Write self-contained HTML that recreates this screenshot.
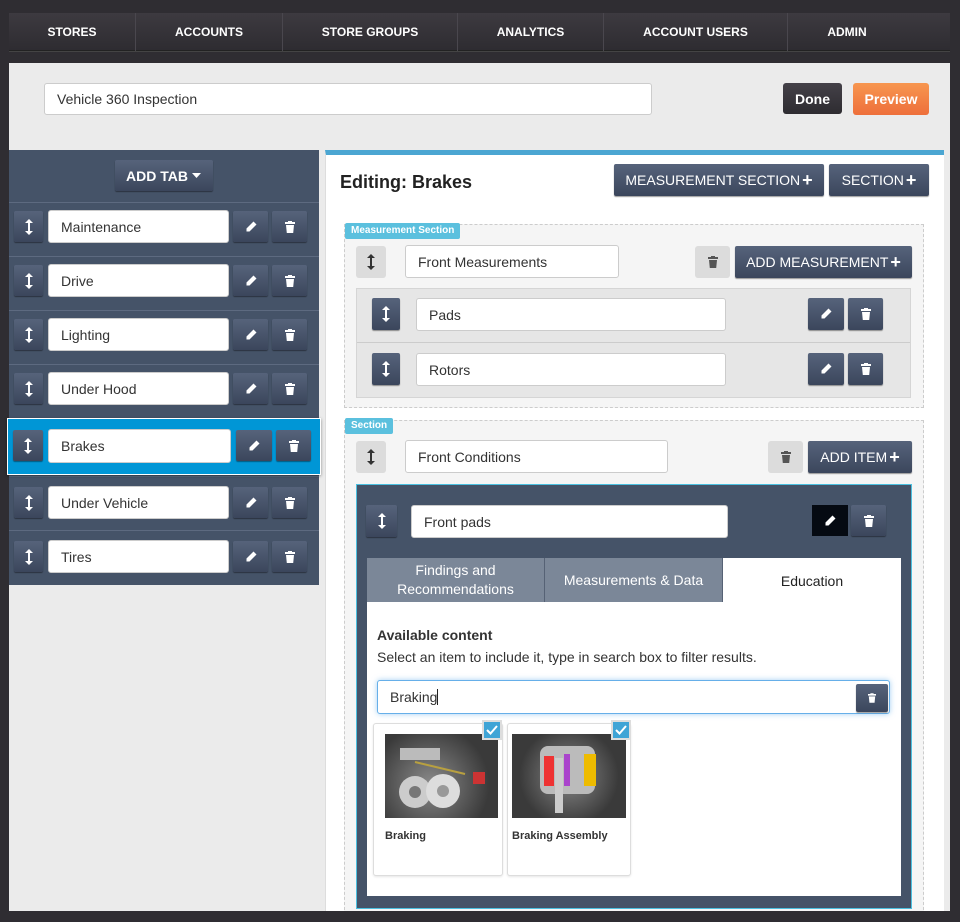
<!DOCTYPE html>
<html><head><meta charset="utf-8">
<style>
*{box-sizing:border-box;margin:0;padding:0}
body{width:960px;height:922px;background:#2f2d32;font-family:"Liberation Sans",sans-serif;position:relative;overflow:hidden}
.a{position:absolute}
.nav{left:9px;top:13px;width:941px;height:38px;background:linear-gradient(#3d3a40,#2e2c31);border-bottom:1px solid #222;box-shadow:0 1px 0 #444}
.nav div{position:absolute;top:0;height:38px;line-height:38px;color:#fff;font-weight:bold;font-size:12px;text-align:center;border-right:1px solid #4a474e}
.in{background:#fff;border:1px solid #ccc;border-radius:3px;font-size:14px;color:#333;padding-left:12px;display:flex;align-items:center}
.btn{background:linear-gradient(#56637b,#3b465c);color:#fff;display:flex;align-items:center;justify-content:center;border-radius:2px;box-shadow:0 1px 1px rgba(0,0,0,.4)}
.gbtn{background:#dcdcdc;color:#444;display:flex;align-items:center;justify-content:center;border-radius:3px}
.row{left:9px;width:310px;height:52px;background:#455368;border-top:1px solid #5d6a80}
.lbl{background:#5bc0de;color:#fff;font-weight:bold;font-size:10px;padding:1px 6px;border-radius:2px;height:16px;line-height:14px}
.dash{border:1px dashed #ccc;background:#f5f5f5}
.tab{top:558px;height:44px;background:#7b8798;color:#fff;font-size:14px;display:flex;align-items:center;justify-content:center;text-align:center;line-height:19px;border-right:1px solid #566275}
.card{background:#fff;border:1px solid #ddd;border-radius:3px;box-shadow:0 1px 2px rgba(0,0,0,.1)}
.chk{width:20px;height:20px;background:#3fa4d6;border:2px solid #ddd;display:flex;align-items:center;justify-content:center}
</style></head><body>

<div class="a nav">
<div style="left:0;width:127px">STORES</div>
<div style="left:127px;width:147px">ACCOUNTS</div>
<div style="left:274px;width:175px">STORE GROUPS</div>
<div style="left:449px;width:146px">ANALYTICS</div>
<div style="left:595px;width:184px">ACCOUNT USERS</div>
<div style="left:779px;width:118px;border:none">ADMIN</div>
</div>

<div class="a" style="left:9px;top:63px;width:941px;height:848px;background:#ebebeb"></div>
<div class="a in" style="left:44px;top:83px;width:608px;height:32px;font-size:14px">Vehicle 360 Inspection</div>
<div class="a" style="left:783px;top:83px;width:59px;height:31px;background:linear-gradient(#444148,#2e2c31);border-radius:3px;color:#fff;font-weight:bold;font-size:14px;display:flex;align-items:center;justify-content:center">Done</div>
<div class="a" style="left:853px;top:83px;width:76px;height:32px;background:linear-gradient(#f7964f,#ee6f3b);border-radius:3px;color:#fff;font-weight:bold;font-size:14px;display:flex;align-items:center;justify-content:center">Preview</div>

<!-- left panel -->
<div class="a" style="left:9px;top:150px;width:310px;height:435px;background:#455368"></div>
<div class="a btn" style="left:115px;top:160px;width:98px;height:31px;font-weight:bold;font-size:14px">ADD TAB <svg width="10" height="6" style="margin-left:4px"><path d="M0 0h9L4.5 5z" fill="#fff"/></svg></div>

<div class="a row" style="top:202px"></div>
<div class="a row" style="top:256px"></div>
<div class="a row" style="top:310px"></div>
<div class="a row" style="top:364px"></div>
<div class="a row" style="top:476px"></div>
<div class="a row" style="top:530px;height:55px"></div>
<div class="a" style="left:7px;top:418px;width:314px;height:57px;background:#0096d6;border:1px solid #fff;box-shadow:0 1px 3px rgba(0,0,0,.4)"></div>

<!-- left rows content -->
<div class="a btn" style="left:14px;top:211px;width:29px;height:31px"><svg width="8" height="16" viewBox="0 0 8 16"><path d="M4 0L0 4h3v8H0l4 4 4-4H5V4h3z" fill="#fff"/></svg></div>
<div class="a in" style="left:48px;top:210px;width:181px;height:33px">Maintenance</div>
<div class="a btn" style="left:233px;top:211px;width:35px;height:31px"><svg width="12" height="12" viewBox="0 0 12 12"><path d="M8.5 0.5l3 3-7 7H1.5v-3z" fill="#fff"/></svg></div>
<div class="a btn" style="left:272px;top:211px;width:35px;height:31px"><svg width="10" height="12" viewBox="0 0 10 12"><path d="M3 0h4v1h3v2H0V1h3zM1 4h8l-.8 8H1.8z" fill="#fff"/></svg></div>

<div class="a btn" style="left:14px;top:265px;width:29px;height:31px"><svg width="8" height="16" viewBox="0 0 8 16"><path d="M4 0L0 4h3v8H0l4 4 4-4H5V4h3z" fill="#fff"/></svg></div>
<div class="a in" style="left:48px;top:264px;width:181px;height:33px">Drive</div>
<div class="a btn" style="left:233px;top:265px;width:35px;height:31px"><svg width="12" height="12" viewBox="0 0 12 12"><path d="M8.5 0.5l3 3-7 7H1.5v-3z" fill="#fff"/></svg></div>
<div class="a btn" style="left:272px;top:265px;width:35px;height:31px"><svg width="10" height="12" viewBox="0 0 10 12"><path d="M3 0h4v1h3v2H0V1h3zM1 4h8l-.8 8H1.8z" fill="#fff"/></svg></div>

<div class="a btn" style="left:14px;top:319px;width:29px;height:31px"><svg width="8" height="16" viewBox="0 0 8 16"><path d="M4 0L0 4h3v8H0l4 4 4-4H5V4h3z" fill="#fff"/></svg></div>
<div class="a in" style="left:48px;top:318px;width:181px;height:33px">Lighting</div>
<div class="a btn" style="left:233px;top:319px;width:35px;height:31px"><svg width="12" height="12" viewBox="0 0 12 12"><path d="M8.5 0.5l3 3-7 7H1.5v-3z" fill="#fff"/></svg></div>
<div class="a btn" style="left:272px;top:319px;width:35px;height:31px"><svg width="10" height="12" viewBox="0 0 10 12"><path d="M3 0h4v1h3v2H0V1h3zM1 4h8l-.8 8H1.8z" fill="#fff"/></svg></div>

<div class="a btn" style="left:14px;top:373px;width:29px;height:31px"><svg width="8" height="16" viewBox="0 0 8 16"><path d="M4 0L0 4h3v8H0l4 4 4-4H5V4h3z" fill="#fff"/></svg></div>
<div class="a in" style="left:48px;top:372px;width:181px;height:33px">Under Hood</div>
<div class="a btn" style="left:233px;top:373px;width:35px;height:31px"><svg width="12" height="12" viewBox="0 0 12 12"><path d="M8.5 0.5l3 3-7 7H1.5v-3z" fill="#fff"/></svg></div>
<div class="a btn" style="left:272px;top:373px;width:35px;height:31px"><svg width="10" height="12" viewBox="0 0 10 12"><path d="M3 0h4v1h3v2H0V1h3zM1 4h8l-.8 8H1.8z" fill="#fff"/></svg></div>

<div class="a btn" style="left:13px;top:430px;width:30px;height:31px"><svg width="8" height="16" viewBox="0 0 8 16"><path d="M4 0L0 4h3v8H0l4 4 4-4H5V4h3z" fill="#fff"/></svg></div>
<div class="a in" style="left:48px;top:429px;width:183px;height:34px">Brakes</div>
<div class="a btn" style="left:236px;top:430px;width:36px;height:31px"><svg width="12" height="12" viewBox="0 0 12 12"><path d="M8.5 0.5l3 3-7 7H1.5v-3z" fill="#fff"/></svg></div>
<div class="a btn" style="left:276px;top:430px;width:35px;height:31px"><svg width="10" height="12" viewBox="0 0 10 12"><path d="M3 0h4v1h3v2H0V1h3zM1 4h8l-.8 8H1.8z" fill="#fff"/></svg></div>

<div class="a btn" style="left:14px;top:487px;width:29px;height:31px"><svg width="8" height="16" viewBox="0 0 8 16"><path d="M4 0L0 4h3v8H0l4 4 4-4H5V4h3z" fill="#fff"/></svg></div>
<div class="a in" style="left:48px;top:486px;width:181px;height:33px">Under Vehicle</div>
<div class="a btn" style="left:233px;top:487px;width:35px;height:31px"><svg width="12" height="12" viewBox="0 0 12 12"><path d="M8.5 0.5l3 3-7 7H1.5v-3z" fill="#fff"/></svg></div>
<div class="a btn" style="left:272px;top:487px;width:35px;height:31px"><svg width="10" height="12" viewBox="0 0 10 12"><path d="M3 0h4v1h3v2H0V1h3zM1 4h8l-.8 8H1.8z" fill="#fff"/></svg></div>

<div class="a btn" style="left:14px;top:541px;width:29px;height:31px"><svg width="8" height="16" viewBox="0 0 8 16"><path d="M4 0L0 4h3v8H0l4 4 4-4H5V4h3z" fill="#fff"/></svg></div>
<div class="a in" style="left:48px;top:540px;width:181px;height:33px">Tires</div>
<div class="a btn" style="left:233px;top:541px;width:35px;height:31px"><svg width="12" height="12" viewBox="0 0 12 12"><path d="M8.5 0.5l3 3-7 7H1.5v-3z" fill="#fff"/></svg></div>
<div class="a btn" style="left:272px;top:541px;width:35px;height:31px"><svg width="10" height="12" viewBox="0 0 10 12"><path d="M3 0h4v1h3v2H0V1h3zM1 4h8l-.8 8H1.8z" fill="#fff"/></svg></div>

<!-- right panel -->
<div class="a" style="left:325px;top:150px;width:619px;height:761px;background:#fff;border-top:5px solid #4ba6d2;border-left:1px solid #ddd"></div>
<div class="a" style="left:340px;top:172px;font-size:18px;font-weight:bold;color:#222">Editing: Brakes</div>
<div class="a btn" style="left:614px;top:164px;width:210px;height:32px;font-size:14px">MEASUREMENT SECTION <b style="font-size:18px;margin-left:2px">+</b></div>
<div class="a btn" style="left:829px;top:164px;width:100px;height:32px;font-size:14px">SECTION <b style="font-size:18px;margin-left:2px">+</b></div>

<div class="a dash" style="left:344px;top:224px;width:580px;height:184px"></div>
<div class="a lbl" style="left:345px;top:223px">Measurement Section</div>
<div class="a gbtn" style="left:356px;top:246px;width:30px;height:32px"><svg width="8" height="16" viewBox="0 0 8 16"><path d="M4 0L0 4h3v8H0l4 4 4-4H5V4h3z" fill="#333"/></svg></div>
<div class="a in" style="left:405px;top:245px;width:214px;height:33px">Front Measurements</div>
<div class="a gbtn" style="left:695px;top:246px;width:35px;height:32px"><svg width="10" height="12" viewBox="0 0 10 12"><path d="M3 0h4v1h3v2H0V1h3zM1 4h8l-.8 8H1.8z" fill="#555"/></svg></div>
<div class="a btn" style="left:735px;top:246px;width:177px;height:32px;font-size:14px">ADD MEASUREMENT <b style="font-size:18px;margin-left:2px">+</b></div>
<div class="a" style="left:356px;top:288px;width:555px;height:110px;background:#e6e6e6;border:1px solid #d5d5d5"></div>
<div class="a" style="left:357px;top:342px;width:553px;height:1px;background:#ccc"></div>
<div class="a btn" style="left:372px;top:298px;width:28px;height:32px"><svg width="8" height="16" viewBox="0 0 8 16"><path d="M4 0L0 4h3v8H0l4 4 4-4H5V4h3z" fill="#fff"/></svg></div>
<div class="a in" style="left:416px;top:298px;width:310px;height:33px">Pads</div>
<div class="a btn" style="left:808px;top:298px;width:36px;height:32px"><svg width="12" height="12" viewBox="0 0 12 12"><path d="M8.5 0.5l3 3-7 7H1.5v-3z" fill="#fff"/></svg></div>
<div class="a btn" style="left:848px;top:298px;width:35px;height:32px"><svg width="10" height="12" viewBox="0 0 10 12"><path d="M3 0h4v1h3v2H0V1h3zM1 4h8l-.8 8H1.8z" fill="#fff"/></svg></div>
<div class="a btn" style="left:372px;top:353px;width:28px;height:32px"><svg width="8" height="16" viewBox="0 0 8 16"><path d="M4 0L0 4h3v8H0l4 4 4-4H5V4h3z" fill="#fff"/></svg></div>
<div class="a in" style="left:416px;top:353px;width:310px;height:33px">Rotors</div>
<div class="a btn" style="left:808px;top:353px;width:36px;height:32px"><svg width="12" height="12" viewBox="0 0 12 12"><path d="M8.5 0.5l3 3-7 7H1.5v-3z" fill="#fff"/></svg></div>
<div class="a btn" style="left:848px;top:353px;width:35px;height:32px"><svg width="10" height="12" viewBox="0 0 10 12"><path d="M3 0h4v1h3v2H0V1h3zM1 4h8l-.8 8H1.8z" fill="#fff"/></svg></div>

<div class="a dash" style="left:344px;top:420px;width:580px;height:500px"></div>
<div class="a lbl" style="left:345px;top:418px">Section</div>
<div class="a gbtn" style="left:356px;top:441px;width:30px;height:32px"><svg width="8" height="16" viewBox="0 0 8 16"><path d="M4 0L0 4h3v8H0l4 4 4-4H5V4h3z" fill="#333"/></svg></div>
<div class="a in" style="left:405px;top:440px;width:263px;height:33px">Front Conditions</div>
<div class="a gbtn" style="left:768px;top:441px;width:35px;height:32px"><svg width="10" height="12" viewBox="0 0 10 12"><path d="M3 0h4v1h3v2H0V1h3zM1 4h8l-.8 8H1.8z" fill="#555"/></svg></div>
<div class="a btn" style="left:808px;top:441px;width:104px;height:32px;font-size:14px">ADD ITEM <b style="font-size:18px;margin-left:2px">+</b></div>

<div class="a" style="left:356px;top:484px;width:556px;height:425px;background:#455368;border:1px solid #4bc0e0"></div>
<div class="a btn" style="left:366px;top:505px;width:31px;height:32px"><svg width="8" height="16" viewBox="0 0 8 16"><path d="M4 0L0 4h3v8H0l4 4 4-4H5V4h3z" fill="#fff"/></svg></div>
<div class="a in" style="left:411px;top:505px;width:317px;height:33px">Front pads</div>
<div class="a" style="left:812px;top:505px;width:36px;height:31px;background:#050a12;display:flex;align-items:center;justify-content:center"><svg width="12" height="12" viewBox="0 0 12 12"><path d="M8.5 0.5l3 3-7 7H1.5v-3z" fill="#fff"/></svg></div>
<div class="a btn" style="left:851px;top:505px;width:35px;height:31px"><svg width="10" height="12" viewBox="0 0 10 12"><path d="M3 0h4v1h3v2H0V1h3zM1 4h8l-.8 8H1.8z" fill="#fff"/></svg></div>

<div class="a tab" style="left:367px;width:178px">Findings and<br>Recommendations</div>
<div class="a tab" style="left:545px;width:178px">Measurements &amp; Data</div>
<div class="a" style="left:723px;top:558px;width:178px;height:45px;background:#fff;color:#222;font-size:14px;display:flex;align-items:center;justify-content:center">Education</div>
<div class="a" style="left:367px;top:602px;width:534px;height:294px;background:#fff"></div>
<div class="a" style="left:377px;top:627px;font-size:14px;font-weight:bold;color:#333">Available content</div>
<div class="a" style="left:377px;top:649px;font-size:14px;color:#333">Select an item to include it, type in search box to filter results.</div>
<div class="a in" style="left:377px;top:680px;width:513px;height:34px;border:1px solid #66afe9;box-shadow:0 0 6px rgba(102,175,233,.6);padding-left:12px">Braking<span style="display:inline-block;width:1px;height:16px;background:#222"></span></div>
<div class="a btn" style="left:856px;top:684px;width:32px;height:28px"><svg width="8" height="10" viewBox="0 0 10 12"><path d="M3 0h4v1h3v2H0V1h3zM1 4h8l-.8 8H1.8z" fill="#fff"/></svg></div>

<div class="a card" style="left:373px;top:723px;width:130px;height:153px"></div>
<div class="a" style="left:385px;top:734px;width:113px;height:84px;background:radial-gradient(circle at 40% 60%,#8a8a8a,#3a3a3a 70%)">
<svg width="113" height="84"><circle cx="30" cy="58" r="16" fill="#ccc"/><circle cx="30" cy="58" r="6" fill="#777"/><circle cx="58" cy="57" r="17" fill="#ddd"/><circle cx="58" cy="57" r="6" fill="#999"/><rect x="15" y="14" width="40" height="12" fill="#bbb"/><path d="M30 28L80 40" stroke="#b8a040" stroke-width="2"/><rect x="88" y="38" width="12" height="12" fill="#c33"/></svg></div>
<div class="a" style="left:385px;top:830px;font-size:11px;font-weight:bold;color:#333">Braking</div>
<div class="a chk" style="left:482px;top:720px"><svg width="12" height="10"><path d="M1 5l3.5 3.5L11 1" stroke="#fff" stroke-width="2" fill="none"/></svg></div>

<div class="a card" style="left:507px;top:723px;width:124px;height:153px"></div>
<div class="a" style="left:512px;top:734px;width:114px;height:84px;background:radial-gradient(circle at 50% 50%,#888,#3a3a3a 70%)">
<svg width="114" height="84"><rect x="28" y="12" width="55" height="48" rx="8" fill="#bbb"/><rect x="32" y="22" width="10" height="30" fill="#e33"/><rect x="52" y="20" width="6" height="32" fill="#a4c"/><rect x="72" y="20" width="12" height="32" fill="#eb0"/><rect x="43" y="24" width="8" height="55" fill="#ccc"/></svg></div>
<div class="a" style="left:512px;top:830px;font-size:11px;font-weight:bold;color:#333">Braking Assembly</div>
<div class="a chk" style="left:611px;top:720px"><svg width="12" height="10"><path d="M1 5l3.5 3.5L11 1" stroke="#fff" stroke-width="2" fill="none"/></svg></div>

<div class="a" style="left:0;top:911px;width:960px;height:11px;background:#2f2d32"></div>
</body></html>
